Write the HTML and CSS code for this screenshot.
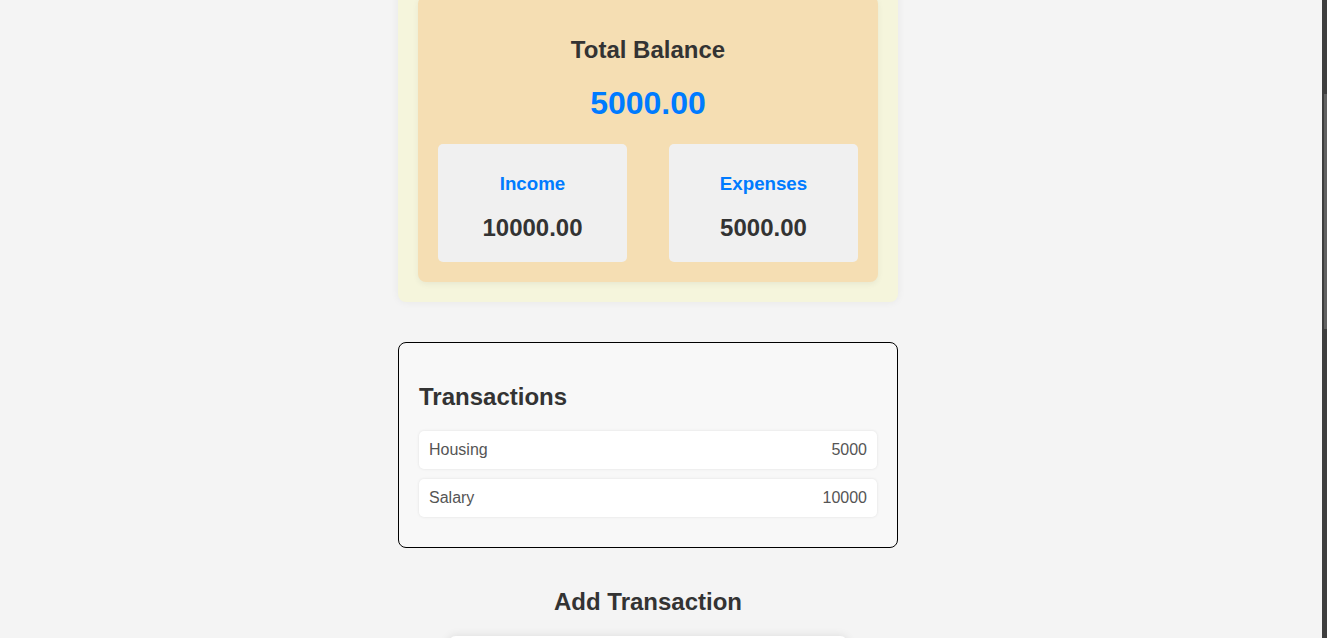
FILE: index.html
```html
<!DOCTYPE html>
<html lang="en">
<head>
<meta charset="utf-8">
<title>Expense Tracker</title>
<link rel="stylesheet" href="styles.css">
</head>
<body>
<div class="app">
  <header class="header">
    <h1 class="app-title">Expense Tracker</h1>
  </header>

  <section class="balance-wrap">
    <div class="balance-card">
      <h2 class="balance-title">Total Balance</h2>
      <h1 class="balance-amount">5000.00</h1>
      <div class="summary-row">
        <div class="summary-box">
          <h3 class="summary-label">Income</h3>
          <p class="summary-value">10000.00</p>
        </div>
        <div class="summary-box">
          <h3 class="summary-label">Expenses</h3>
          <p class="summary-value">5000.00</p>
        </div>
      </div>
    </div>
  </section>

  <section class="transactions">
    <h2 class="section-title">Transactions</h2>
    <ul class="tx-list">
      <li class="tx-item"><span>Housing</span><span>5000</span></li>
      <li class="tx-item"><span>Salary</span><span>10000</span></li>
    </ul>
  </section>

  <h2 class="add-title">Add Transaction</h2>
  <form class="tx-form">
    <label class="field-label">Description</label>
    <input class="field" type="text" placeholder="Enter description">
    <label class="field-label">Amount</label>
    <input class="field" type="number" placeholder="Enter amount">
    <label class="field-label">Category</label>
    <select class="field"><option>Housing</option><option>Salary</option></select>
    <label class="field-label">Type</label>
    <select class="field"><option>Expense</option><option>Income</option></select>
    <button class="submit" type="button">Add Transaction</button>
  </form>
  <div class="footer-space"></div>
</div>
<div class="scrollbar" aria-hidden="true"><div class="scrollbar-thumb"></div></div>
<script src="script.js"></script>
</body>
</html>
```

FILE: styles.css
```css
html {
  background: #f4f4f4;
}
body {
  margin: 8px;
  background: #f4f4f4;
  font-family: "Liberation Sans", Arial, sans-serif;
  color: #333;
}
.app {
  max-width: 1280px;
}
.header {
  height: 203px;
  padding-top: 20px;
  box-sizing: border-box;
  text-align: center;
}
.app-title {
  margin: 0;
}
.balance-wrap {
  width: 500px;
  box-sizing: border-box;
  margin: 0 auto;
  padding: 20px;
  background: #f5f5dc;
  border-radius: 8px;
  box-shadow: 0 0 8px rgba(0, 0, 0, 0.06);
}
.balance-card {
  padding: 20px;
  background: #f5deb3;
  border-radius: 8px;
  box-shadow: 0 2px 6px rgba(0, 0, 0, 0.06);
  text-align: center;
  overflow: hidden;
}
.balance-title {
  font-size: 24px;
  margin: 19.92px 0;
}
.balance-amount {
  font-size: 32px;
  color: #007bff;
  margin: 21.44px 0;
}
.summary-row {
  display: flex;
  justify-content: space-between;
}
.summary-box {
  width: 45%;
  padding: 10px;
  box-sizing: border-box;
  background: #f0f0f0;
  border-radius: 5px;
}
.summary-label {
  font-size: 18.72px;
  color: #007bff;
  margin: 18.72px 0 0;
}
.summary-value {
  font-size: 24px;
  font-weight: bold;
  margin: 19.92px 0 10px;
}
.transactions {
  width: 500px;
  box-sizing: border-box;
  margin: 40px auto;
  padding: 20px;
  border: 1px solid #000;
  border-radius: 8px;
  background: #f8f8f8;
}
.section-title {
  font-size: 24px;
  margin: 19.92px 0;
}
.tx-list {
  list-style: none;
  margin: 0;
  padding: 0;
}
.tx-item {
  display: flex;
  justify-content: space-between;
  padding: 10px;
  margin-bottom: 10px;
  background: #fff;
  border-radius: 5px;
  box-shadow: 0 0 3px rgba(0, 0, 0, 0.1);
  color: #555;
  font-size: 16px;
}
.add-title {
  text-align: center;
  font-size: 24px;
  margin: 19.92px 0;
}
.tx-form {
  width: 400px;
  box-sizing: border-box;
  margin: 0 auto;
  padding: 20px;
  background: #fff;
  border-radius: 8px;
  box-shadow: 0 0 10px rgba(0, 0, 0, 0.1);
  display: flex;
  flex-direction: column;
  gap: 10px;
}
.field-label {
  font-weight: bold;
  font-size: 16px;
}
.field {
  padding: 10px;
  border: 1px solid #ccc;
  border-radius: 4px;
  font-size: 16px;
  font-family: inherit;
}
.submit {
  padding: 12px;
  border: none;
  border-radius: 4px;
  background: #007bff;
  color: #fff;
  font-size: 16px;
  font-family: inherit;
}
.footer-space {
  height: 430px;
}
.scrollbar {
  position: fixed;
  top: 0;
  right: 0;
  width: 5px;
  height: 100vh;
  background: #3e3e3e;
}
.scrollbar-thumb {
  position: absolute;
  top: 94px;
  right: 0;
  width: 3px;
  height: 235px;
  background: #616161;
}
```

FILE: script.js
```js
window.scrollTo(0, 235);
```
